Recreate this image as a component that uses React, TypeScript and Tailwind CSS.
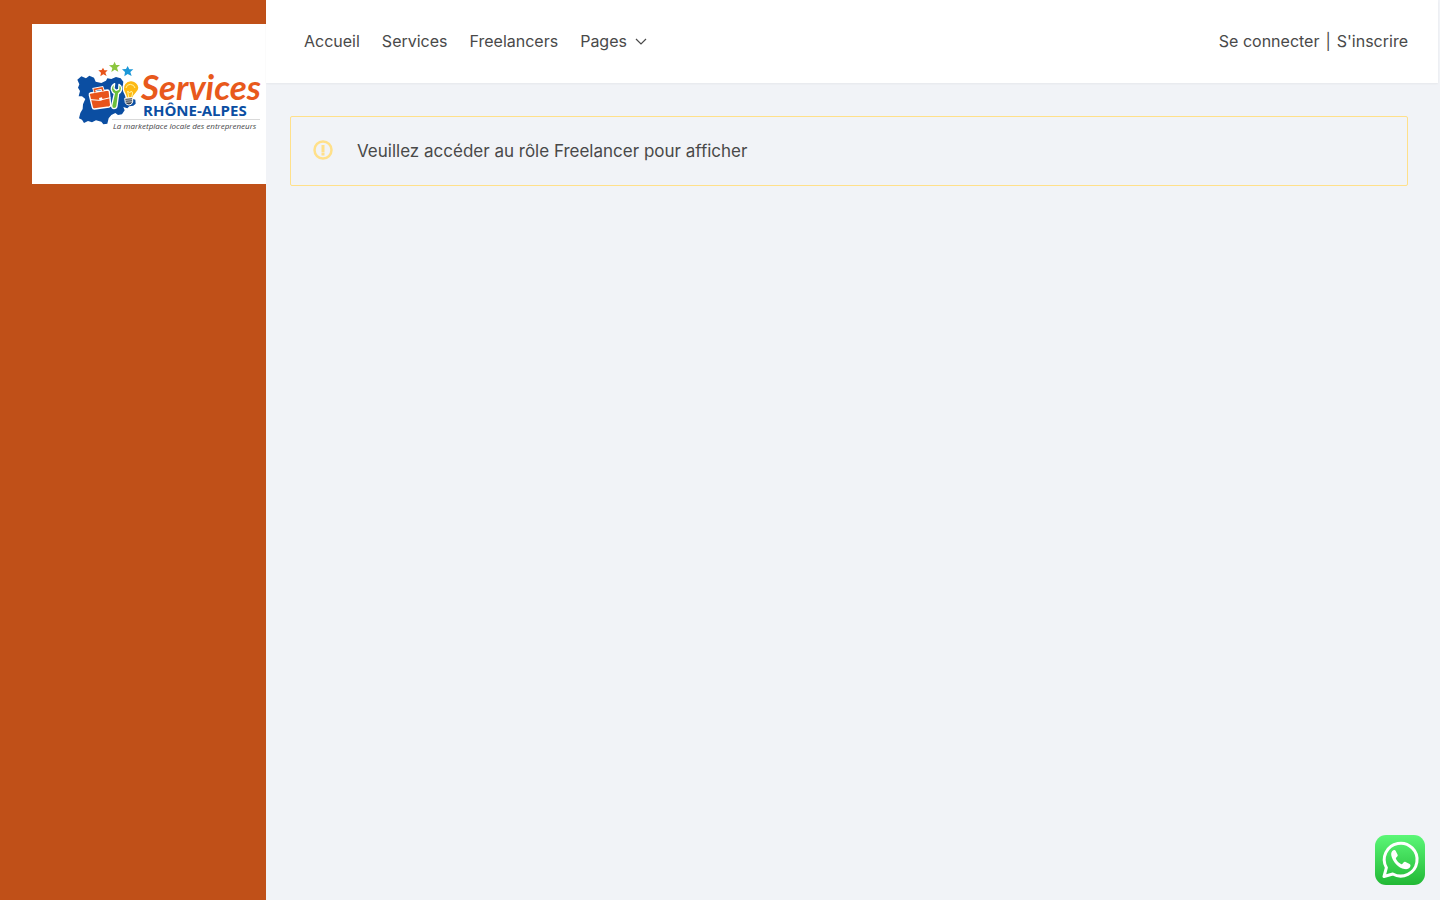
const navLinks = [
  { label: "Accueil", href: "#accueil" },
  { label: "Services", href: "#services" },
  { label: "Freelancers", href: "#freelancers" },
]

function Logo() {
  return (
    <svg
      viewBox="0 0 240 160"
      className="block h-40 w-60 max-w-none bg-white"
      role="img"
      aria-label="Services Rhône-Alpes"
    >
      <g transform="translate(38 31) scale(0.3333)">
        {/* Region map */}
        <path
          fill="#0b4ea2"
          d="M22 74L34 64L48 70L58 62L72 68L77 80L94 84L108 77L112 70L124 72L138 66L152 70L160 80L158 96L166 112L182 130L196 134L197 146L190 152L178 154L172 160L160 156L164 166L156 178L144 180L136 174L124 180L116 190L112 206L100 208L94 200L78 196L66 202L54 198L42 204L36 194L27 190L31 174L38 162L39 148L46 132L36 124L26 124L30 108L24 98L28 88z"
        />
        {/* Stars */}
        <path fill="#e8541b" d="M99 38l4 8 10 0-7 7 4 10-10-5-9 6 2-11-8-7 10-1z" />
        <path fill="#8cc63f" d="M134 20l4 10 12 0-9 8 4 12-11-6-10 7 3-12-10-8 12-1z" />
        <path fill="#1c98d8" d="M173 33l5 10 12 0-9 8 4 12-12-6-10 7 2-13-9-8 12-1z" />
        {/* Briefcase */}
        <path
          fill="#e8541b"
          stroke="#fff"
          strokeWidth="4"
          strokeLinejoin="round"
          d="M61 114l51-9q5 0 6 5l4 40q0 5-5 6l-44 6q-5 0-6-5l-9-37q-1-5 3-6z"
        />
        <path fill="none" stroke="#fff" strokeWidth="10" d="M75 110l-2-7 23-4 3 8" />
        <path fill="none" stroke="#e8541b" strokeWidth="5" d="M75 112l-2-9 23-4 3 9" />
        <path fill="none" stroke="#fff" strokeWidth="3" d="M63 134l24 2 34-8" />
        <path fill="#fff" d="M87 129l9-2 2 8-9 2z" />
        {/* Wrench */}
        <path
          fill="#6cbf3b"
          stroke="#fff"
          strokeWidth="4"
          strokeLinejoin="round"
          d="M134 86q-11 6-10 18 2 9 9 12l-8 36q0 8 7 9 8 0 9-8l5-37q9-5 9-17-2-9-8-11l-1 15-8 3-6-6z"
        />
        {/* Light bulb */}
        <path
          fill="#fdb913"
          stroke="#fff"
          strokeWidth="4"
          d="M182 77c-15 1-24 13-22 26 2 12 9 16 9 27l21-2c0-11 17-15 17-30-1-13-13-22-25-21z"
        />
        <path
          fill="none"
          stroke="#fff3a0"
          strokeWidth="3"
          d="M168 99q2-11 13-11 12 1 14 11M176 127l-3-19 6 6 5-6 4 6-3 13"
        />
        <path
          fill="#39424e"
          stroke="#fff"
          strokeWidth="3"
          d="M164 130l24-2 0 13q-3 9-11 9-9 0-11-7z"
        />
        <path stroke="#fff" strokeWidth="2" d="M166 136l22-2M167 142l20-2" />
      </g>
      <text
        x="109"
        y="76"
        fontSize="35"
        fill="#e8591c"
        className="font-['Lato',sans-serif] font-bold italic"
      >
        Services
      </text>
      <text
        x="111"
        y="92"
        fontSize="15"
        fill="#0b4ea2"
        className="font-['Open_Sans',sans-serif] font-bold"
      >
        RHÔNE-ALPES
      </text>
      <path stroke="#d9d9d9" d="M80 95.500h148" />
      <text
        x="81"
        y="105"
        fontSize="8"
        fill="#3f3f46"
        className="font-['Open_Sans',sans-serif] italic"
      >
        La marketplace locale des entrepreneurs
      </text>
    </svg>
  )
}

function WhatsAppIcon() {
  return (
    <svg viewBox="0 0 50 50" className="size-full" aria-hidden="true">
      <defs>
        <linearGradient id="wa" x1="0" y1="0" x2="0" y2="1">
          <stop offset="0" stopColor="#5bf777" />
          <stop offset="1" stopColor="#22b835" />
        </linearGradient>
      </defs>
      <rect width="50" height="50" rx="11" fill="url(#wa)" />
      <path
        fill="none"
        stroke="#fff"
        strokeWidth="3"
        strokeLinejoin="round"
        d="M9 41.500l2.400-8.800A16.400 16.400 0 1 1 17.800 39z"
      />
      <path
        fill="#fff"
        d="M20.600 15.800c-.5-.9-1.300-.9-2.200-.5-1.700.7-2.600 2.700-2.100 5.100 1.200 6.300 7.100 12.400 13.200 13.700 2.700.5 5-.6 5.700-2.300.5-1.300.4-2.200-.6-2.800l-4-2.100c-.9-.4-1.500-.2-2.100.6l-1 1.300c-.4.5-.9.5-1.500.2-2.200-1.200-3.900-2.900-5-5.100-.3-.6-.2-1 .3-1.400l.9-1c.6-.7.7-1.300.3-2.100z"
      />
    </svg>
  )
}

export default function App() {
  return (
    <div className="flex min-h-screen bg-[#f1f3f7] font-['Inter',sans-serif] text-base text-[#494949]">
      <aside className="w-[266px] shrink-0 overflow-hidden bg-[#c05018] pt-6 pl-8">
        <a href="#accueil" className="block">
          <Logo />
        </a>
      </aside>

      <div className="min-w-0 flex-1">
        <header className="mr-0.5 flex h-[83px] items-center justify-between bg-white pr-[30px] pb-0.5 pl-[38px] shadow-xs">
          <nav className="flex items-center gap-[22px]">
            {navLinks.map((link) => (
              <a key={link.label} href={link.href}>
                {link.label}
              </a>
            ))}
            <button type="button" className="flex items-center gap-2">
              Pages
              <svg viewBox="0 0 12 12" className="size-3" fill="none" stroke="currentColor" strokeWidth="1.200" aria-hidden="true">
                <path d="M1 4l5 5 5-5" />
              </svg>
            </button>
          </nav>
          <div className="flex gap-1.5">
            <a href="#connexion">Se connecter</a>
            <span>|</span>
            <a href="#inscription">S'inscrire</a>
          </div>
        </header>

        <main className="pt-[33px] pr-8 pl-6">
          <div
            role="alert"
            className="flex h-[70px] items-center gap-6 rounded-xs border border-[#ffe08a] px-[22px] pb-0.5 text-[17px]"
          >
            <svg viewBox="0 0 20 20" className="size-5 shrink-0" fill="none" stroke="#ffe08a" aria-hidden="true">
              <circle cx="10" cy="10" r="8.500" strokeWidth="2.500" />
              <path strokeWidth="3" d="M10 5v7M10 12.500v3" />
            </svg>
            <p className="pt-1">Veuillez accéder au rôle Freelancer pour afficher</p>
          </div>
        </main>
      </div>

      <a href="#whatsapp" aria-label="WhatsApp" className="fixed right-[15px] bottom-[15px] size-[50px]">
        <WhatsAppIcon />
      </a>
    </div>
  )
}
